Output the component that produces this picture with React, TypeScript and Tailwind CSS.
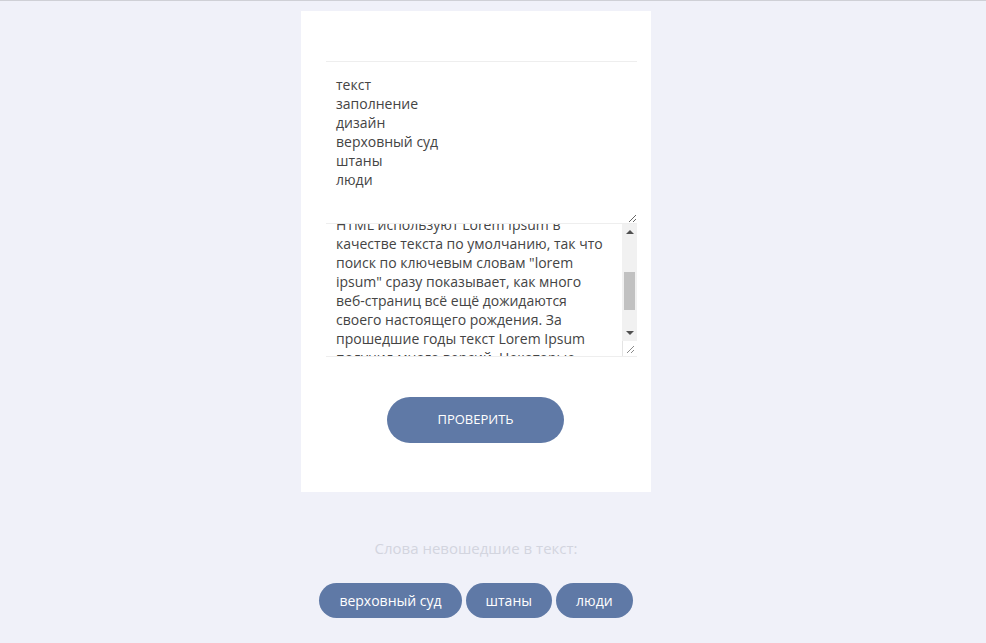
import { useEffect, useRef } from 'react';

const words = ['текст', 'заполнение', 'дизайн', 'верховный суд', 'штаны', 'люди'];

const loremHead =
  'Давно выяснено, что при оценке дизайна и композиции читаемый текст мешает сосредоточиться. ' +
  'Lorem Ipsum используют потому, что тот обеспечивает более или менее стандартное заполнение шаблона, ' +
  'а также реальное распределение букв и пробелов в абзацах, которое не получается при простой дубликации ' +
  '"Здесь ваш текст.. Здесь ваш текст.. Здесь ваш текст.." Многие программы электронной вёрстки и редакторы';

const loremTail =
  'HTML используют Lorem Ipsum в качестве текста по умолчанию, так что поиск по ключевым словам "lorem ipsum" ' +
  'сразу показывает, как много веб-страниц всё ещё дожидаются своего настоящего рождения. За прошедшие годы ' +
  'текст Lorem Ipsum получил много версий. Некоторые версии появились по ошибке, некоторые - намеренно ' +
  '(например, юмористические варианты).';

const missing = ['верховный суд', 'штаны', 'люди'];

function Grip() {
  return (
    <svg width="9" height="9" viewBox="0 0 9 9" className="text-[#8a8a8a]">
      <path d="M8 1 L1 8 M8 5 L5 8" stroke="currentColor" strokeWidth="1" fill="none" />
    </svg>
  );
}

export default function App() {
  const boxRef = useRef<HTMLDivElement>(null);
  const tailRef = useRef<HTMLDivElement>(null);

  useEffect(() => {
    if (boxRef.current && tailRef.current) {
      boxRef.current.scrollTop = tailRef.current.offsetTop + 9;
    }
  }, []);

  return (
    <div className="min-h-[643px] bg-[#f0f1f9] border-t border-[#cfd0d6] font-['Open_Sans',sans-serif] pt-[10px]">
      <div className="w-[952px]">
        <div className="mx-auto w-[350px] bg-white pt-[50px] pb-[49px]">
          <textarea
            defaultValue={words.join('\n')}
            className="block ml-[25px] w-[311px] h-[163px] border-y border-[#eeeeee] px-[10px] pt-[13px] text-[14px] leading-[19px] text-[#444] outline-none resize-y"
          />

          <div className="ml-[25px] w-[311px] h-[133px] border-b border-[#eeeeee] flex">
            <div ref={boxRef} className="relative flex-1 overflow-hidden pl-[10px] text-[14px] leading-[19px] text-[#444]">
              <div className="w-[270px]">{loremHead}</div>
              <div ref={tailRef} className="w-[270px] pb-[40px]">{loremTail}</div>
            </div>
            <div className="w-[15px] flex flex-col">
              <div className="flex-1 bg-[#f1f1f1] flex flex-col items-center">
                <div className="h-[16px] flex items-center justify-center">
                  <div className="w-0 h-0 border-x-[4px] border-x-transparent border-b-[4px] border-b-[#505050]" />
                </div>
                <div className="flex-1 w-full px-[2px] pt-[32px] pb-[15px]">
                  <div className="h-full bg-[#c1c1c1]" />
                </div>
                <div className="h-[16px] flex items-center justify-center">
                  <div className="w-0 h-0 border-x-[4px] border-x-transparent border-t-[4px] border-t-[#505050]" />
                </div>
              </div>
              <div className="h-[15px] bg-white border-l border-[#e4e4e4] flex items-end justify-end pr-[2px] pb-[2px]">
                <Grip />
              </div>
            </div>
          </div>

          <div className="flex justify-center mt-[41px]">
            <button className="w-[177px] h-[46px] rounded-full bg-[#5f79a6] text-white text-[13px] uppercase -mt-px -ml-px">
              Проверить
            </button>
          </div>
        </div>

        <p className="mt-[45px] text-center text-[15px] text-[#d3d5df]">Слова невошедшие в текст:</p>

        <div className="mt-[23px] flex justify-center gap-[4px]">
          {missing.map(w => (
            <span key={w} className="h-[35px] px-[20px] rounded-full bg-[#5f79a6] text-white text-[14px] flex items-center">
              {w}
            </span>
          ))}
        </div>
      </div>
    </div>
  );
}
